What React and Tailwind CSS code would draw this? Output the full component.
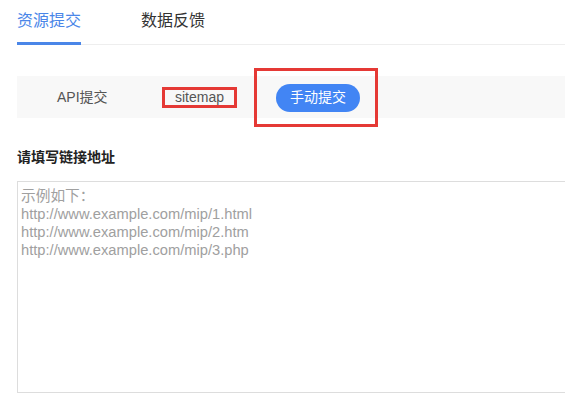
export default function App() {
  const font = { fontFamily: '"Liberation Sans", Arial, "Noto Sans CJK SC", sans-serif' };
  return (
    <div className="w-[565px] h-[401px] overflow-hidden bg-white pl-[17px]" style={font}>
      <div className="w-[600px]">
        <div className="flex gap-[60px] border-b border-[#eeeeee] h-[45px]">
          <div className="pt-[9px] h-[45px] border-b-[3px] border-[#4a86e8] text-[16px] leading-[24px] text-[#4a86e8] px-0 -mb-px w-[64px] whitespace-nowrap">
            资源提交
          </div>
          <div className="pt-[9px] text-[16px] leading-[24px] text-[#333333] whitespace-nowrap">数据反馈</div>
        </div>
        <div className="mt-[31px] h-[42px] bg-[#f8f8f8] flex items-center text-[14px] text-[#555555]">
          <div className="ml-[40px] w-[49px] whitespace-nowrap shrink-0">API提交</div>
          <div className="ml-[56px] w-[75px] h-[21px] shrink-0 border-[3px] border-[#e53935] flex items-center justify-center leading-[15px]">
            sitemap
          </div>
          <div className="ml-[17px] w-[124px] h-[59px] shrink-0 border-[3px] border-[#e53935] pl-[19px] pt-[13px]">
            <div className="w-[84px] h-[28px] rounded-full bg-[#4285f4] text-white flex items-center justify-center text-[14px] whitespace-nowrap">
              手动提交
            </div>
          </div>
        </div>
        <div className="mt-[29px] text-[14px] leading-[20px] font-bold text-[#222222]">请填写链接地址</div>
        <textarea
          className="block mt-[14px] w-[600px] h-[212px] border border-[#dddddd] pt-[5px] pl-[3px] text-[14.7px] leading-[18px] text-[#333] placeholder:text-[#a0a0a0] outline-none resize-none"
          style={font}
          placeholder={"示例如下：\nhttp://www.example.com/mip/1.html\nhttp://www.example.com/mip/2.htm\nhttp://www.example.com/mip/3.php"}
        />
      </div>
    </div>
  );
}
